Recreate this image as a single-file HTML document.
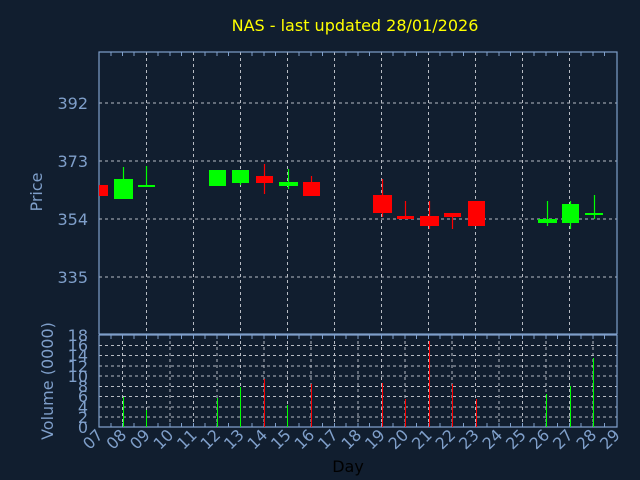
<!DOCTYPE html>
<html><head><meta charset="utf-8"><style>
html,body{margin:0;padding:0;background:#111e2f;}
svg{display:block;font-family:"DejaVu Sans","Liberation Sans",sans-serif;}
</style></head><body>
<svg width="640" height="480" viewBox="0 0 640 480">
<rect width="640" height="480" fill="#111e2f"/>
<text x="355" y="31" fill="#ffff00" font-size="16" text-anchor="middle">NAS - last updated 28/01/2026</text>
<g stroke="#b8bcc4" stroke-width="1" stroke-dasharray="3,3" fill="none">
<path d="M99 103H617M99 161H617M99 219H617M99 277H617"/>
<path d="M146.5 52V334M193.5 52V334M240.5 52V334M287.5 52V334M334.5 52V334M381.5 52V334M428.5 52V334M475.5 52V334M522.5 52V334M569.5 52V334"/>
<path d="M99 345.5H617M99 355.5H617M99 366H617M99 376H617M99 386.5H617M99 396.5H617M99 407H617M99 417H617"/>
<path d="M122.5 335V427M146.5 335V427M170 335V427M193.5 335V427M217 335V427M240.5 335V427M264 335V427M287.5 335V427M311 335V427M334.5 335V427M358 335V427M381.5 335V427M405 335V427M428.5 335V427M452 335V427M475.5 335V427M499 335V427M522.5 335V427M546 335V427M569.5 335V427M593 335V427"/>
</g>
<g stroke="#7f9fca" stroke-width="1.2" fill="none">
<rect x="99" y="52" width="518" height="282"/>
<path d="M99 335H617M99 335V427H617V335"/>
</g>
<g stroke="#7f9fca" stroke-width="1" id="ticks">
<path d="M111 52v4M122.5 52v4M134 52v4M158 52v4M170 52v4M181.5 52v4M205 52v4M217 52v4M228.5 52v4M252 52v4M264 52v4M275.5 52v4M299 52v4M311 52v4M322.5 52v4M346 52v4M358 52v4M369.5 52v4M393 52v4M405 52v4M416.5 52v4M440 52v4M452 52v4M463.5 52v4M487 52v4M499 52v4M510.5 52v4M534 52v4M546 52v4M557.5 52v4M581 52v4M593 52v4M604.5 52v4"/>
<path d="M111 335v4M122.5 335v4M134 335v4M146.5 335v4M158 335v4M170 335v4M181.5 335v4M193.5 335v4M205 335v4M217 335v4M228.5 335v4M240.5 335v4M252 335v4M264 335v4M275.5 335v4M287.5 335v4M299 335v4M311 335v4M322.5 335v4M334.5 335v4M346 335v4M358 335v4M369.5 335v4M381.5 335v4M393 335v4M405 335v4M416.5 335v4M428.5 335v4M440 335v4M452 335v4M463.5 335v4M475.5 335v4M487 335v4M499 335v4M510.5 335v4M522.5 335v4M534 335v4M546 335v4M557.5 335v4M569.5 335v4M581 335v4M593 335v4M604.5 335v4"/>
<path d="M111 427v-4M122.5 427v-4M134 427v-4M146.5 427v-4M158 427v-4M170 427v-4M181.5 427v-4M193.5 427v-4M205 427v-4M217 427v-4M228.5 427v-4M240.5 427v-4M252 427v-4M264 427v-4M275.5 427v-4M287.5 427v-4M299 427v-4M311 427v-4M322.5 427v-4M334.5 427v-4M346 427v-4M358 427v-4M369.5 427v-4M381.5 427v-4M393 427v-4M405 427v-4M416.5 427v-4M428.5 427v-4M440 427v-4M452 427v-4M463.5 427v-4M475.5 427v-4M487 427v-4M499 427v-4M510.5 427v-4M522.5 427v-4M534 427v-4M546 427v-4M557.5 427v-4M569.5 427v-4M581 427v-4M593 427v-4M604.5 427v-4"/>
</g>
<g>
<rect x="99" y="185" width="9" height="11" fill="#ff0000"/>
<path d="M123.5 167V179" stroke="#00ff00" stroke-width="1.2"/><rect x="114" y="179" width="19" height="20" fill="#00ff00"/>
<path d="M146.5 166V187" stroke="#00ff00" stroke-width="1.2"/><rect x="138" y="185" width="17" height="2" fill="#00ff00"/>
<rect x="209" y="170" width="17" height="16" fill="#00ff00"/>
<path d="M240.5 183V185" stroke="#00ff00" stroke-width="1.2"/><rect x="232" y="170" width="17" height="13" fill="#00ff00"/>
<path d="M264.5 164V194" stroke="#ff0000" stroke-width="1.2"/><rect x="256" y="176" width="17" height="7" fill="#ff0000"/>
<path d="M288.5 169V189" stroke="#00ff00" stroke-width="1.2"/><rect x="279" y="182" width="19" height="4" fill="#00ff00"/>
<path d="M311.5 176V182" stroke="#ff0000" stroke-width="1.2"/><rect x="303" y="182" width="17" height="14" fill="#ff0000"/>
<path d="M382.5 179V217" stroke="#ff0000" stroke-width="1.2"/><rect x="373" y="195" width="19" height="18" fill="#ff0000"/>
<path d="M405.5 201V216" stroke="#ff0000" stroke-width="1.2"/><rect x="397" y="216" width="17" height="3" fill="#ff0000"/>
<path d="M429.5 201V229" stroke="#ff0000" stroke-width="1.2"/><rect x="420" y="216" width="19" height="10" fill="#ff0000"/>
<path d="M452.5 213V229" stroke="#ff0000" stroke-width="1.2"/><rect x="444" y="213" width="17" height="4" fill="#ff0000"/>
<rect x="468" y="201" width="17" height="25" fill="#ff0000"/>
<path d="M547.5 201V226" stroke="#00ff00" stroke-width="1.2"/><rect x="538" y="219" width="19" height="4" fill="#00ff00"/>
<path d="M570.5 201V229" stroke="#00ff00" stroke-width="1.2"/><rect x="562" y="204" width="17" height="19" fill="#00ff00"/>
<path d="M594.5 195V219" stroke="#00ff00" stroke-width="1.2"/><rect x="585" y="213" width="18" height="2" fill="#00ff00"/>
</g>
<g stroke-width="1">
<path d="M123.5 397V427M146.5 410V427M217.5 398V427M240.5 387V427M287.5 405V427M546.5 394V427M570.5 386V427M593.5 358V427" stroke="#00ff00"/>
<path d="M264.5 379V427M311.5 384V427M382.5 383V427M405.5 399V427M429.5 341V427M452.5 384V427M476.5 399V427" stroke="#ff0000"/>
</g>
<g fill="#7f9fca" font-size="16" text-anchor="end">
<text x="88" y="109">392</text><text x="88" y="167">373</text><text x="88" y="225">354</text><text x="88" y="283">335</text>
<text x="88" y="433">0</text><text x="88" y="423">2</text><text x="88" y="413">4</text><text x="88" y="402">6</text><text x="88" y="392">8</text><text x="88" y="382">10</text><text x="88" y="372">12</text><text x="88" y="361">14</text><text x="88" y="351">16</text><text x="88" y="341">18</text>
</g>
<text transform="translate(42,192) rotate(-90)" fill="#7f9fca" font-size="16" text-anchor="middle">Price</text>
<text transform="translate(53,381) rotate(-90)" fill="#7f9fca" font-size="16" text-anchor="middle">Volume (0000)</text>
<g fill="#7f9fca" font-size="16" text-anchor="end">
<text transform="translate(104,436) rotate(-45)">07</text>
<text transform="translate(127.5,436) rotate(-45)">08</text>
<text transform="translate(151,436) rotate(-45)">09</text>
<text transform="translate(174.5,436) rotate(-45)">10</text>
<text transform="translate(198,436) rotate(-45)">11</text>
<text transform="translate(221.5,436) rotate(-45)">12</text>
<text transform="translate(245,436) rotate(-45)">13</text>
<text transform="translate(268.5,436) rotate(-45)">14</text>
<text transform="translate(292,436) rotate(-45)">15</text>
<text transform="translate(315.5,436) rotate(-45)">16</text>
<text transform="translate(339,436) rotate(-45)">17</text>
<text transform="translate(362.5,436) rotate(-45)">18</text>
<text transform="translate(386,436) rotate(-45)">19</text>
<text transform="translate(409.5,436) rotate(-45)">20</text>
<text transform="translate(433,436) rotate(-45)">21</text>
<text transform="translate(456.5,436) rotate(-45)">22</text>
<text transform="translate(480,436) rotate(-45)">23</text>
<text transform="translate(503.5,436) rotate(-45)">24</text>
<text transform="translate(527,436) rotate(-45)">25</text>
<text transform="translate(550.5,436) rotate(-45)">26</text>
<text transform="translate(574,436) rotate(-45)">27</text>
<text transform="translate(597.5,436) rotate(-45)">28</text>
<text transform="translate(621,436) rotate(-45)">29</text>
</g>
<text x="348" y="472" fill="#000000" font-size="16" text-anchor="middle">Day</text>
</svg>
</body></html>
